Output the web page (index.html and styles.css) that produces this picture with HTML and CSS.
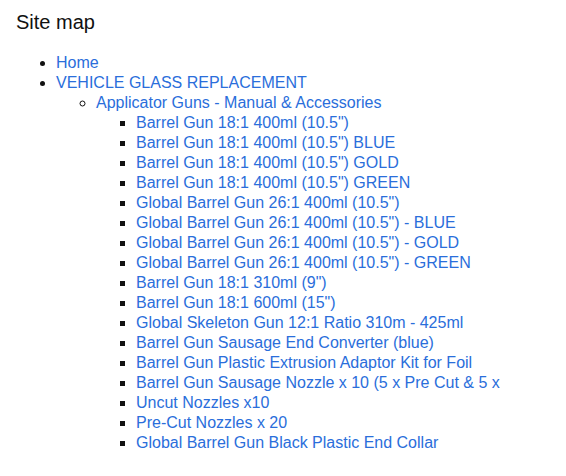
FILE: index.html
```html
<!DOCTYPE html>
<html lang="en">
<head>
    <meta charset="UTF-8">
    <meta name="viewport" content="width=device-width, initial-scale=1.0">
    <title>Site map</title>
    <link rel="stylesheet" href="styles.css">
</head>
<body>
    <div class="sitemap">
        <h1 class="sitemap-title">Site map</h1>
        <ul class="level-1">
            <li><a href="#">Home</a></li>
            <li>
                <a href="#">VEHICLE GLASS REPLACEMENT</a>
                <ul class="level-2">
                    <li>
                        <a href="#">Applicator Guns - Manual &amp; Accessories</a>
                        <ul class="level-3">
                            <li><a href="#">Barrel Gun 18:1 400ml (10.5")</a></li>
                            <li><a href="#">Barrel Gun 18:1 400ml (10.5") BLUE</a></li>
                            <li><a href="#">Barrel Gun 18:1 400ml (10.5") GOLD</a></li>
                            <li><a href="#">Barrel Gun 18:1 400ml (10.5") GREEN</a></li>
                            <li><a href="#">Global Barrel Gun 26:1 400ml (10.5")</a></li>
                            <li><a href="#">Global Barrel Gun 26:1 400ml (10.5") - BLUE</a></li>
                            <li><a href="#">Global Barrel Gun 26:1 400ml (10.5") - GOLD</a></li>
                            <li><a href="#">Global Barrel Gun 26:1 400ml (10.5") - GREEN</a></li>
                            <li><a href="#">Barrel Gun 18:1 310ml (9")</a></li>
                            <li><a href="#">Barrel Gun 18:1 600ml (15")</a></li>
                            <li><a href="#">Global Skeleton Gun 12:1 Ratio 310m - 425ml</a></li>
                            <li><a href="#">Barrel Gun Sausage End Converter (blue)</a></li>
                            <li><a href="#">Barrel Gun Plastic Extrusion Adaptor Kit for Foil</a></li>
                            <li><a href="#">Barrel Gun Sausage Nozzle x 10 (5 x Pre Cut &amp; 5 x</a></li>
                            <li><a href="#">Uncut Nozzles x10</a></li>
                            <li><a href="#">Pre-Cut Nozzles x 20</a></li>
                            <li><a href="#">Global Barrel Gun Black Plastic End Collar</a></li>
                        </ul>
                    </li>
                </ul>
            </li>
        </ul>
    </div>
</body>
</html>
```

FILE: styles.css
```css
body {
    margin: 0;
    padding: 10px 16px;
    background-color: #fff;
    font-family: "Liberation Sans", Arial, sans-serif;
    color: #111;
}
.sitemap-title {
    margin: 0 0 19px;
    font-size: 20px;
    font-weight: normal;
    line-height: 24px;
}
.sitemap ul {
    margin: 0;
    padding-left: 40px;
    font-size: 16px;
    line-height: 20px;
}
.level-1 {
    list-style-type: disc;
}
.level-2 {
    list-style-type: circle;
}
.level-3 {
    list-style-type: square;
}
.sitemap li::marker {
    color: #111;
}
.sitemap a {
    color: #2a6edb;
    text-decoration: none;
}
```
